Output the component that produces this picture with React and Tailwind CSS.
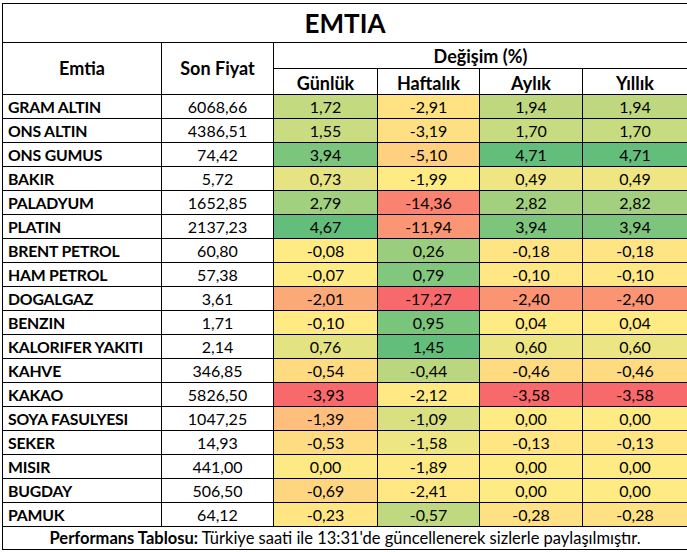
import React from "react";

const rows = [
  ["GRAM ALTIN", "6068,66", 1.72, -2.91, 1.94, 1.94],
  ["ONS ALTIN", "4386,51", 1.55, -3.19, 1.7, 1.7],
  ["ONS GUMUS", "74,42", 3.94, -5.1, 4.71, 4.71],
  ["BAKIR", "5,72", 0.73, -1.99, 0.49, 0.49],
  ["PALADYUM", "1652,85", 2.79, -14.36, 2.82, 2.82],
  ["PLATIN", "2137,23", 4.67, -11.94, 3.94, 3.94],
  ["BRENT PETROL", "60,80", -0.08, 0.26, -0.18, -0.18],
  ["HAM PETROL", "57,38", -0.07, 0.79, -0.1, -0.1],
  ["DOGALGAZ", "3,61", -2.01, -17.27, -2.4, -2.4],
  ["BENZIN", "1,71", -0.1, 0.95, 0.04, 0.04],
  ["KALORIFER YAKITI", "2,14", 0.76, 1.45, 0.6, 0.6],
  ["KAHVE", "346,85", -0.54, -0.44, -0.46, -0.46],
  ["KAKAO", "5826,50", -3.93, -2.12, -3.58, -3.58],
  ["SOYA FASULYESI", "1047,25", -1.39, -1.09, 0.0, 0.0],
  ["SEKER", "14,93", -0.53, -1.58, -0.13, -0.13],
  ["MISIR", "441,00", 0.0, -1.89, 0.0, 0.0],
  ["BUGDAY", "506,50", -0.69, -2.41, 0.0, 0.0],
  ["PAMUK", "64,12", -0.23, -0.57, -0.28, -0.28],
];

const RED = [248, 105, 107];
const YEL = [255, 235, 132];
const GRN = [99, 190, 123];

function mix(a, b, t) {
  const c = a.map((v, i) => Math.round(v + (b[i] - v) * t));
  return `rgb(${c[0]},${c[1]},${c[2]})`;
}

// excel style 3-colour scale, per column
function scale(values) {
  const s = [...values].sort((a, b) => a - b);
  const min = s[0];
  const max = s[s.length - 1];
  const n = s.length;
  const mid = n % 2 ? s[(n - 1) / 2] : (s[n / 2 - 1] + s[n / 2]) / 2;
  return (v) => {
    if (v <= mid) return mix(RED, YEL, mid === min ? 1 : (v - min) / (mid - min));
    return mix(YEL, GRN, (v - mid) / (max - mid));
  };
}

const colors = [2, 3, 4, 5].map((c) => scale(rows.map((r) => r[c])));

const fmt = (v) => v.toFixed(2).replace(".", ",");

export default function App() {
  return (
    <div className="w-[687px] h-[552px] bg-white overflow-hidden pt-[3px] pl-[2px] font-['Lato',sans-serif] text-black">
      <table className="border-collapse table-fixed w-[685px]">
        <colgroup>
          <col className="w-[159px]" />
          <col className="w-[112px]" />
          <col className="w-[104px]" />
          <col className="w-[102px]" />
          <col className="w-[103px]" />
          <col className="w-[105px]" />
        </colgroup>
        <thead>
          <tr className="h-[39px]">
            <th colSpan={6} className="border border-black text-[26px] font-bold leading-none">
              EMTIA
            </th>
          </tr>
          <tr className="h-[26px]">
            <th rowSpan={2} className="border border-black text-[18px] font-bold">Emtia</th>
            <th rowSpan={2} className="border border-black text-[18px] font-bold">Son Fiyat</th>
            <th colSpan={4} className="border border-black text-[18px] font-bold leading-none">
              Değişim (%)
            </th>
          </tr>
          <tr className="h-[26px]">
            {["Günlük", "Haftalık", "Aylık", "Yıllık"].map((h) => (
              <th key={h} className="border border-black text-[18px] font-bold leading-none pt-[2px]">
                {h}
              </th>
            ))}
          </tr>
        </thead>
        <tbody>
          {rows.map((r) => (
            <tr key={r[0]} className="h-[24px] text-[16px] leading-none">
              <td className="border border-black pl-[5px] pt-[1px] font-bold whitespace-nowrap text-[15.8px] tracking-[-0.2px]">{r[0]}</td>
              <td className="border border-black text-center pt-[1px]">{r[1]}</td>
              {[2, 3, 4, 5].map((c, i) => (
                <td
                  key={c}
                  className="border border-black text-center pt-[1px]"
                  style={{ backgroundColor: colors[i](r[c]) }}
                >
                  {fmt(r[c])}
                </td>
              ))}
            </tr>
          ))}
          <tr className="h-[23px]">
            <td colSpan={6} className="border border-black text-center text-[16.5px] leading-none whitespace-nowrap">
              <span className="font-bold">Performans Tablosu:</span> Türkiye saati ile 13:31'de güncellenerek sizlerle paylaşılmıştır.
            </td>
          </tr>
        </tbody>
      </table>
    </div>
  );
}
